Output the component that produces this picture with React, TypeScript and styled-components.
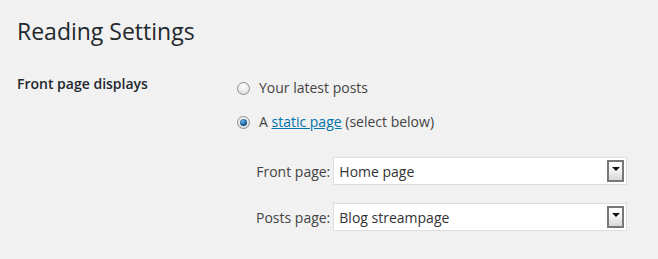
import styled, { createGlobalStyle } from 'styled-components';

const GlobalStyle = createGlobalStyle`
  html, body {
    margin: 0;
    padding: 0;
    background: #f1f1f1;
  }
  body {
    font-family: "Open Sans", "Liberation Sans", sans-serif;
    color: #444;
    font-size: 14px;
  }
`;

const Wrap = styled.div`
  padding: 13px 17px 0 17px;
`;

const Title = styled.h1`
  margin: 0;
  font-size: 23px;
  font-weight: 400;
  line-height: 37px;
  color: #23282d;
`;

const Row = styled.div`
  display: grid;
  grid-template-columns: 220px 1fr;
  margin-top: 24px;
`;

const Label = styled.div`
  font-weight: 600;
  color: #23282d;
  font-size: 14px;
  line-height: 20px;
`;

const Options = styled.div`
  display: flex;
  flex-direction: column;
  gap: 14px;
  margin-top: 4px;
`;

const RadioLine = styled.label`
  display: flex;
  align-items: center;
  gap: 9px;
  line-height: 20px;
  color: #444;
`;

const Radio = styled.span<{ checked?: boolean }>`
  width: 11px;
  height: 11px;
  border-radius: 50%;
  border: 1px solid #8f8f8f;
  background: radial-gradient(circle at 50% 30%, #fff, #d6d6d6);
  display: flex;
  align-items: center;
  justify-content: center;
  &::after {
    content: '';
    display: ${({ checked }) => (checked ? 'block' : 'none')};
    width: 7px;
    height: 7px;
    border-radius: 50%;
    background: radial-gradient(circle at 40% 35%, #6db3e6, #0a4f86 70%, #0b2f52);
  }
`;

const Link = styled.a`
  color: #0073aa;
  text-decoration: underline;
`;

const Selects = styled.div`
  display: grid;
  grid-template-columns: auto 1fr;
  column-gap: 3px;
  row-gap: 18px;
  align-items: center;
  margin-top: 25px;
  padding-left: 19px;
`;

const SelectLabel = styled.span`
  color: #444;
  text-align: right;
`;

const SelectBox = styled.div`
  height: 28px;
  box-sizing: border-box;
  width: 294px;
  background: #fff;
  border: 1px solid #ddd;
  display: flex;
  align-items: center;
  justify-content: space-between;
  padding: 0 2px 0 5px;
  color: #333;
`;

const DropButton = styled.span`
  width: 17px;
  height: 22px;
  box-sizing: border-box;
  border: 2px solid #777;
  background: linear-gradient(#fff 0%, #f4f4f4 45%, #d8d8d8 100%);
  display: flex;
  justify-content: center;
  padding-top: 5px;
  &::after {
    content: '';
    width: 0;
    height: 0;
    border-left: 4px solid transparent;
    border-right: 4px solid transparent;
    border-top: 4px solid #111;
  }
`;

export default function App() {
  return (
    <Wrap>
      <GlobalStyle />
      <Title>Reading Settings</Title>
      <Row>
        <Label>Front page displays</Label>
        <div>
          <Options>
            <RadioLine>
              <Radio />
              Your latest posts
            </RadioLine>
            <RadioLine>
              <Radio checked />
              <span>
                A <Link href="#">static page</Link> (select below)
              </span>
            </RadioLine>
          </Options>
          <Selects>
            <SelectLabel>Front page:</SelectLabel>
            <SelectBox>
              Home page
              <DropButton />
            </SelectBox>
            <SelectLabel>Posts page:</SelectLabel>
            <SelectBox>
              Blog streampage
              <DropButton />
            </SelectBox>
          </Selects>
        </div>
      </Row>
    </Wrap>
  );
}
